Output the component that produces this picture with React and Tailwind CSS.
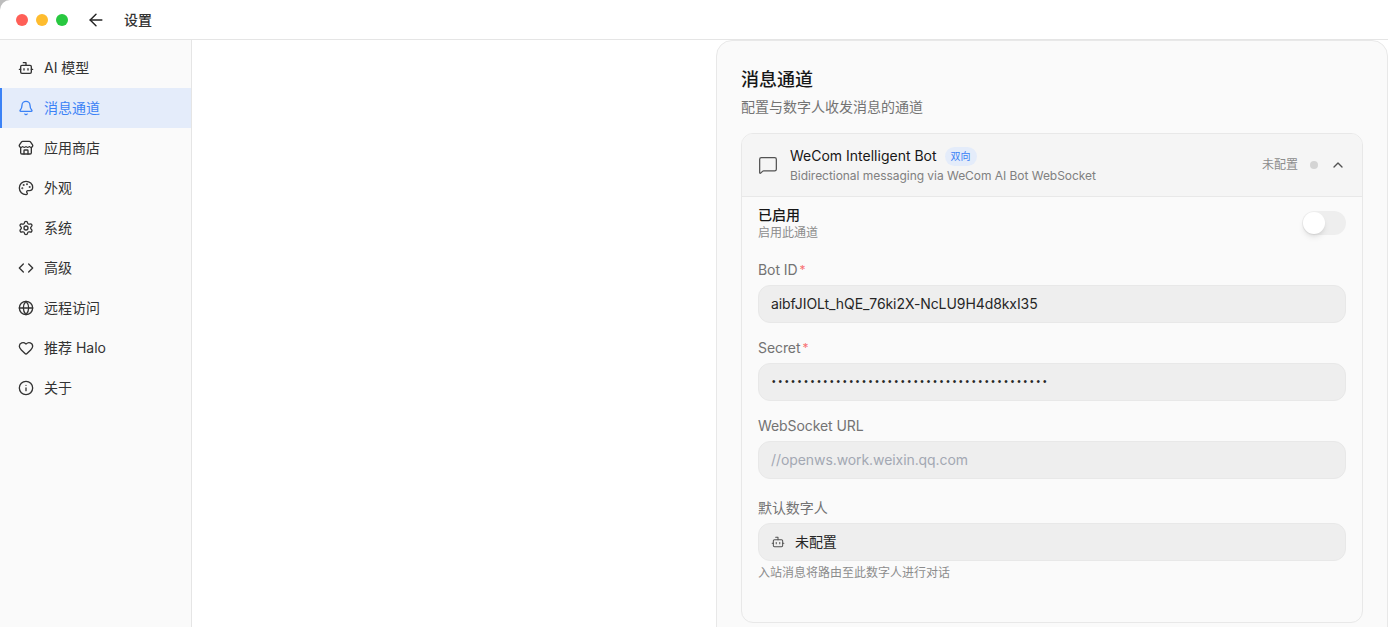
import {
  ArrowLeft,
  Bell,
  Bot,
  ChevronUp,
  Code,
  Globe,
  Heart,
  Info,
  MessageSquare,
  Palette,
  Settings,
  Store,
} from "lucide-react";

const navItems = [
  { label: "AI 模型", icon: Bot },
  { label: "消息通道", icon: Bell, active: true },
  { label: "应用商店", icon: Store },
  { label: "外观", icon: Palette },
  { label: "系统", icon: Settings },
  { label: "高级", icon: Code },
  { label: "远程访问", icon: Globe },
  { label: "推荐 Halo", icon: Heart },
  { label: "关于", icon: Info },
];

function Sidebar() {
  return (
    <aside className="w-[192px] shrink-0 border-r border-[#e5e5e5] bg-[#fafafa] pt-2">
      {navItems.map((item) => {
        const Icon = item.icon;
        return (
          <div
            key={item.label}
            className={
              item.active
                ? "flex h-10 items-center gap-[10px] border-l-2 border-[#3b82f6] bg-[#e4ecfa] pl-[16px] text-sm text-[#3b82f6]"
                : "flex h-10 items-center gap-[10px] pl-[18px] text-sm text-[#333333]"
            }
          >
            <Icon size={16} strokeWidth={2} />
            <span>{item.label}</span>
          </div>
        );
      })}
    </aside>
  );
}

function Field({ label, required, className, children }) {
  return (
    <div className={className}>
      <div className="mb-[5px] flex h-5 items-center text-sm tracking-[-0.08px] text-[#737373]">
        {label}
        {required && <span className="ml-[2px] text-xs text-[#f87171]">*</span>}
      </div>
      {children}
    </div>
  );
}

function Input({ children, className }) {
  return (
    <div
      className={`flex h-[38px] items-center rounded-xl border border-[#e8e8e8] bg-[#eeeeee] px-3 text-sm tracking-[-0.08px] ${className}`}
    >
      {children}
    </div>
  );
}

function ChannelCard() {
  return (
    <div className="overflow-hidden rounded-xl border border-[#e8e8e8] bg-[#fafafa]">
      <div className="flex h-[63px] items-center border-b border-[#e8e8e8] bg-[#f5f5f5] pl-4 pr-4">
        <MessageSquare size={20} strokeWidth={1.5} className="text-[#525252]" />
        <div className="ml-3 flex-1">
          <div className="flex h-[19px] items-center">
            <span className="text-sm text-[#171717]">WeCom Intelligent Bot</span>
            <span className="ml-2 flex h-[19px] w-8 items-center justify-center rounded-full bg-[#e4ecfa] text-[10px] text-[#3b82f6]">
              双向
            </span>
          </div>
          <div className="mt-[2px] text-xs tracking-[-0.04px] text-[#808080]">
            Bidirectional messaging via WeCom AI Bot WebSocket
          </div>
        </div>
        <span className="text-xs text-[#8c8c8c]">未配置</span>
        <span className="ml-3 h-2 w-2 rounded-full bg-[#d4d4d4]" />
        <ChevronUp size={16} strokeWidth={2} className="ml-3 text-[#525252]" />
      </div>

      <div className="h-[425px] px-4 pt-[7px]">
        <div className="flex h-[38px] items-center justify-between">
          <div>
            <div className="text-sm leading-5 font-medium text-[#171717]">已启用</div>
            <div className="text-xs leading-4 text-[#8c8c8c]">启用此通道</div>
          </div>
          <div className="flex h-6 w-11 items-center rounded-full bg-[#eeeeee] pl-[1px]">
            <div className="h-[22px] w-[22px] rounded-full bg-white shadow-md" />
          </div>
        </div>

        <Field label="Bot ID" required className="mt-[18px]">
          <Input className="text-[#262626]">aibfJIOLt_hQE_76ki2X-NcLU9H4d8kxI35</Input>
        </Field>
        <Field label="Secret" required className="mt-[15px]">
          <Input className="text-[#262626]">
            <span className="pt-[1px] pl-[1px] font-['Liberation_Sans'] text-[10px] tracking-[2.95px]">
              {"•".repeat(43)}
            </span>
          </Input>
        </Field>
        <Field label="WebSocket URL" className="mt-[15px]">
          <Input className="text-[#a3a8b3]">//openws.work.weixin.qq.com</Input>
        </Field>
        <Field label="默认数字人" className="mt-[19px]">
          <Input className="text-[#262626]">
            <Bot size={14} strokeWidth={1.75} className="mr-[10px] text-[#525252]" />
            未配置
          </Input>
        </Field>
        <p className="mt-[4px] text-xs leading-4 text-[#8c8c8c]">入站消息将路由至此数字人进行对话</p>
      </div>
    </div>
  );
}

export default function App() {
  return (
    <div
      className="h-[627px] w-full overflow-hidden bg-[#bdbdbd]"
      style={{ fontFamily: 'Inter, "Noto Sans CJK SC", sans-serif' }}
    >
      <div className="flex h-full flex-col overflow-hidden rounded-tl-[10px] bg-white">
        <header className="flex h-10 shrink-0 items-center border-b border-[#e5e5e5] pl-4">
          <div className="flex gap-2">
            <span className="h-3 w-3 rounded-full bg-[#ff5f57]" />
            <span className="h-3 w-3 rounded-full bg-[#febc2e]" />
            <span className="h-3 w-3 rounded-full bg-[#28c840]" />
          </div>
          <ArrowLeft size={20} strokeWidth={1.75} className="ml-[18px] text-[#262626]" />
          <span className="ml-[18px] text-sm font-medium text-[#333333]">设置</span>
        </header>
        <div className="flex min-h-0 flex-1">
          <Sidebar />
          <main className="flex flex-1 justify-end overflow-hidden">
            <section className="h-[620px] w-[672px] shrink-0 rounded-2xl border border-[#e8e8e8] bg-[#fafafa] px-6 pt-6">
              <h2 className="mt-[1px] text-lg leading-7 font-medium text-[#171717]">消息通道</h2>
              <p className="mt-[3px] mb-4 text-sm leading-5 text-[#737373]">配置与数字人收发消息的通道</p>
              <ChannelCard />
            </section>
          </main>
        </div>
      </div>
    </div>
  );
}
